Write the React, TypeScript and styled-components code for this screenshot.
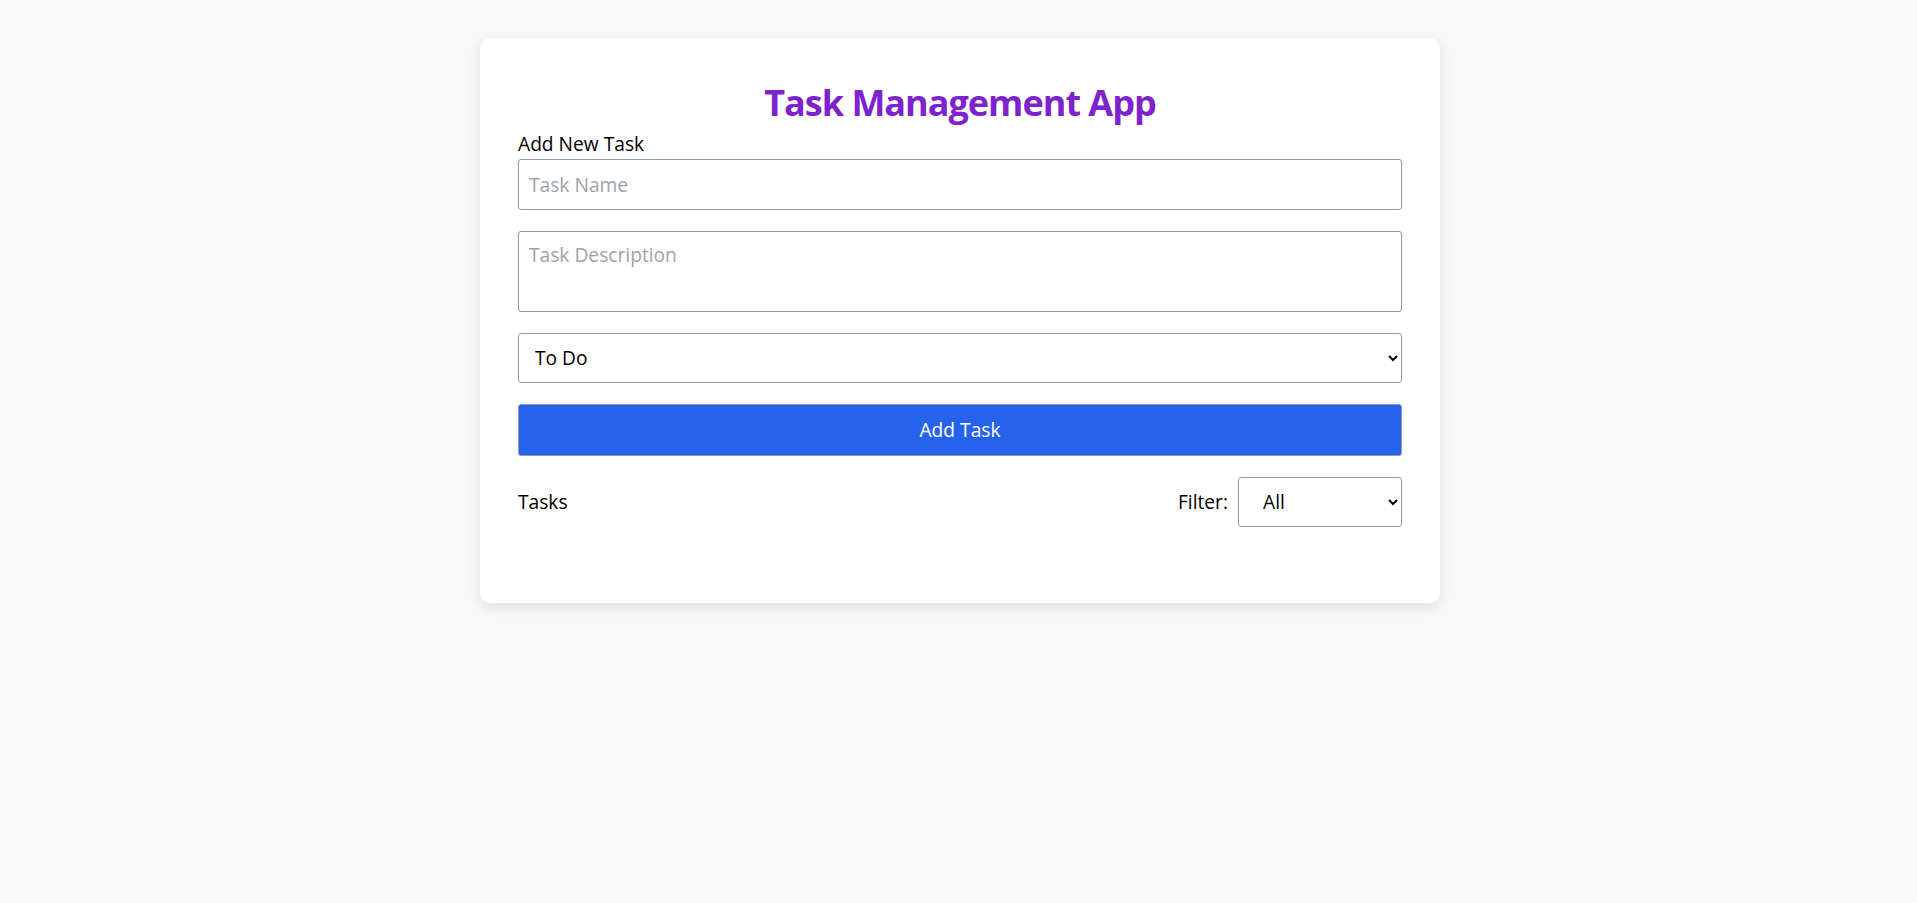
import { useState, type FormEvent } from "react";
import styled, { createGlobalStyle } from "styled-components";

type Status = "todo" | "inprogress" | "done";

type TaskType = {
  id: number;
  name: string;
  description: string;
  status: Status;
};

const GlobalStyle = createGlobalStyle`
  * { box-sizing: border-box; }
  body {
    margin: 0;
    background: #f8f8f8;
    font-family: "Open Sans", "Noto Sans", Arial, sans-serif;
    color: #000;
  }
`;

const Page = styled.div`
  min-height: 100vh;
  padding: 38px 0 0 3px;
`;

const Card = styled.div`
  width: 960px;
  margin: 0 auto;
  padding: 39px 38px 76px;
  background: #fff;
  border-radius: 10px;
  box-shadow: 0 4px 14px rgba(0, 0, 0, 0.1);
`;

const Title = styled.h1`
  margin: 0 0 2px;
  text-align: center;
  font-size: 36px;
  letter-spacing: -1px;
  line-height: 51px;
  font-weight: 700;
  color: #7e22ce;
`;

const Label = styled.label`
  display: block;
  font-size: 19.2px;
  line-height: 28.8px;
`;

const Form = styled.form`
  display: flex;
  flex-direction: column;
  gap: 21px;
`;

const fieldBase = `
  width: 100%;
  border: 1px solid #8e9bb0;
  border-radius: 3px;
  font-family: inherit;
  font-size: 19.2px;
  color: #000;
  background: #fff;
  outline: none;
  &::placeholder { color: #9ca3af; }
`;

const TextInput = styled.input`
  ${fieldBase}
  height: 51px;
  padding: 0 10px;
`;

const TextArea = styled.textarea`
  ${fieldBase}
  height: 81px;
  padding: 9px 10px;
  resize: none;
  line-height: 28.8px;
`;

const Select = styled.select<{ $width?: number }>`
  ${fieldBase}
  height: 50px;
  width: ${p => (p.$width ? `${p.$width}px` : "100%")};
  padding: 0 ${p => (p.$width ? 20 : 12)}px;
`;

const AddButton = styled.button`
  height: 52px;
  border: 1px solid #8e9bb0;
  border-radius: 3px;
  background: #2563eb;
  color: #fff;
  font-family: inherit;
  font-size: 19.2px;
  cursor: pointer;
`;

const ListHeader = styled.div`
  display: flex;
  align-items: center;
  justify-content: space-between;
  margin-top: 21px;
  font-size: 19.2px;
`;

const FilterGroup = styled.div`
  display: flex;
  align-items: center;
  gap: 10px;
`;

const TaskList = styled.ul`
  list-style: none;
  margin: 0;
  padding: 0;
`;

export default function App() {
  const [name, setName] = useState("");
  const [description, setDescription] = useState("");
  const [status, setStatus] = useState<Status>("todo");
  const [filter, setFilter] = useState<"all" | Status>("all");
  const [tasks, setTasks] = useState<TaskType[]>([]);

  const handleAdd = (e: FormEvent<HTMLFormElement>) => {
    e.preventDefault();
    if (!name.trim()) return;
    setTasks([...tasks, { id: Date.now(), name, description, status }]);
    setName("");
    setDescription("");
  };

  const visible = tasks.filter(t => filter === "all" || t.status === filter);

  return (
    <Page>
      <GlobalStyle />
      <Card>
        <Title>Task Management App</Title>
        <Label htmlFor="task-name">Add New Task</Label>
        <Form onSubmit={handleAdd}>
          <TextInput
            id="task-name"
            placeholder="Task Name"
            value={name}
            onChange={e => setName(e.target.value)}
          />
          <TextArea
            placeholder="Task Description"
            value={description}
            onChange={e => setDescription(e.target.value)}
          />
          <Select value={status} onChange={e => setStatus(e.target.value as Status)}>
            <option value="todo">To Do</option>
            <option value="inprogress">In Progress</option>
            <option value="done">Done</option>
          </Select>
          <AddButton type="submit">Add Task</AddButton>
        </Form>
        <ListHeader>
          <span>Tasks</span>
          <FilterGroup>
            <span>Filter:</span>
            <Select
              $width={164}
              value={filter}
              onChange={e => setFilter(e.target.value as "all" | Status)}
            >
              <option value="all">All</option>
              <option value="todo">To Do</option>
              <option value="inprogress">In Progress</option>
              <option value="done">Done</option>
            </Select>
          </FilterGroup>
        </ListHeader>
        <TaskList>
          {visible.map(t => (
            <li key={t.id}>{t.name}</li>
          ))}
        </TaskList>
      </Card>
    </Page>
  );
}
